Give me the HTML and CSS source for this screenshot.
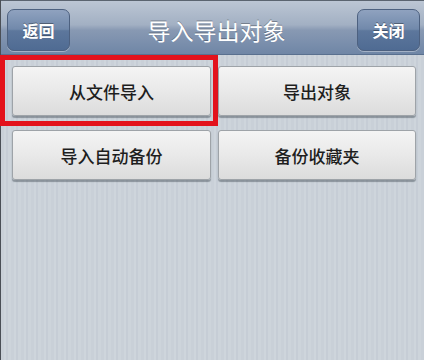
FILE: index.html
```html
<!DOCTYPE html>
<html lang="zh">
<head>
<meta charset="utf-8">
<link rel="stylesheet" href="styles.css">
</head>
<body>
<div class="screen">
  <header class="navbar">
    <button class="nav-btn">返回</button>
    <h1 class="title">导入导出对象</h1>
    <button class="nav-btn">关闭</button>
  </header>
  <main class="grid">
    <div class="cell highlighted">
      <button class="action">从文件导入</button>
      <span class="marker"></span>
    </div>
    <div class="cell"><button class="action">导出对象</button></div>
    <div class="cell"><button class="action">导入自动备份</button></div>
    <div class="cell"><button class="action">备份收藏夹</button></div>
  </main>
</div>
</body>
</html>
```

FILE: styles.css
```css
* { box-sizing: border-box; }
html, body {
  margin: 0;
  padding: 0;
  width: 424px;
  height: 360px;
  overflow: hidden;
}
body {
  font-family: "Noto Sans CJK SC", "Noto Sans", sans-serif;
}
.screen {
  width: 424px;
  height: 360px;
  border-left: 1px solid #4a4f56;
  background-color: #cad1d9;
  background-image: repeating-linear-gradient(90deg,
    #c9d0d8 0px, #c9d0d8 3px,
    #ced5dc 3px, #ced5dc 5px,
    #c6cdd6 5px, #c6cdd6 7px,
    #cdd4db 7px, #cdd4db 10px);
}
.navbar {
  height: 55px;
  display: flex;
  align-items: center;
  justify-content: space-between;
  padding: 0 4px 0 6px;
  background: linear-gradient(#bcc6d4 0%, #a2b0c3 45%, #8899b3 55%, #6f86a6 100%);
  border-top: 1px solid #5b6470;
  border-bottom: 1px solid #59708f;
}
.nav-btn {
  width: 63px;
  height: 42px;
  margin-top: 4px;
  border-radius: 7px;
  border: 1px solid #4d6180;
  background: linear-gradient(#8fa2bf 0%, #7189ab 48%, #5d779c 52%, #4f6b93 100%);
  box-shadow: 0 1px 0 rgba(255,255,255,0.35);
  color: #fff;
  font-family: "Noto Sans CJK SC", sans-serif;
  font-size: 16px;
  font-weight: bold;
  text-shadow: 0 -1px 0 rgba(0,0,0,0.35);
  padding: 0;
}
.title {
  margin: 4px 0 0 6px;
  color: #fff;
  font-size: 23px;
  font-weight: normal;
  letter-spacing: 0;
  text-shadow: 0 -1px 0 rgba(0,0,0,0.3);
}
.grid {
  display: grid;
  grid-template-columns: 199px 198px;
  column-gap: 7px;
  row-gap: 14px;
  padding: 11px 0 0 11px;
}
.cell {
  position: relative;
}
.action {
  display: block;
  width: 100%;
  height: 50px;
  border: 1px solid #9ea3a8;
  border-radius: 3px;
  background: linear-gradient(#f4f4f4 0%, #e9e9e9 50%, #dcdcdc 100%);
  box-shadow: 0 2px 1px rgba(60,70,80,0.45);
  color: #1e1e1e;
  font-family: "Noto Sans CJK SC", sans-serif;
  font-size: 17px;
  font-weight: 500;
  padding: 0;
}
.marker {
  position: absolute;
  left: -12px;
  top: -11px;
  width: 218px;
  height: 71px;
  border: 5px solid #e3121c;
  pointer-events: none;
}
```
